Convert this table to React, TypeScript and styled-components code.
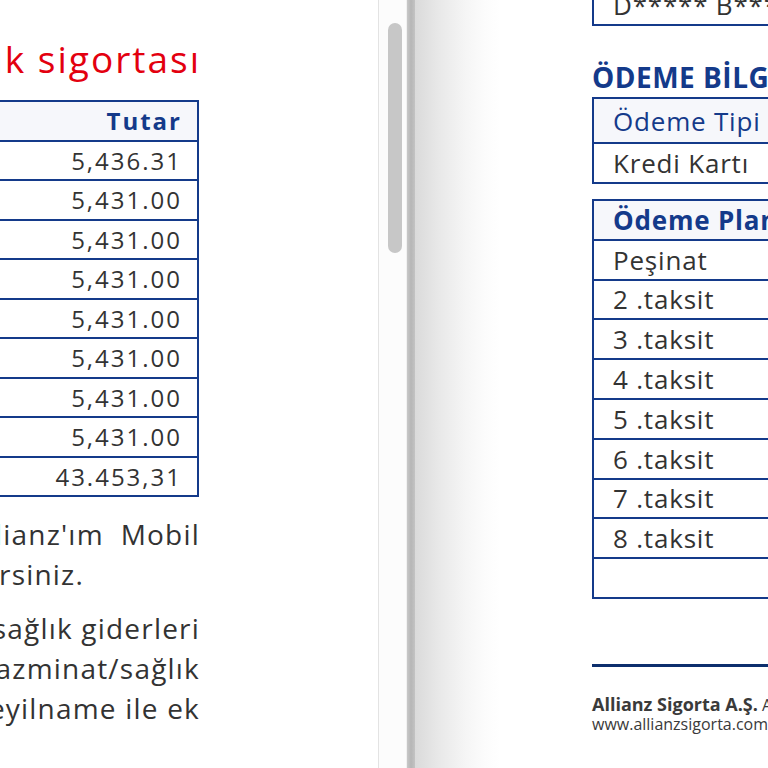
import React from "react";
import styled, { createGlobalStyle } from "styled-components";

const GlobalStyle = createGlobalStyle`
  html, body { margin: 0; padding: 0; background: #fff; }
  body { font-family: "Open Sans", "Liberation Sans", sans-serif; }
`;

const BLUE = "#143a8a";
const TEXT = "#333333";

const Viewer = styled.div`
  display: flex;
  width: 768px;
  height: 768px;
  overflow: hidden;
  background: #fff;
`;

const LeftPane = styled.div`
  width: 378px;
  flex-shrink: 0;
  overflow: hidden;
  display: flex;
  justify-content: flex-end;
  border-right: 1px solid #e3e3e3;
  background: #fff;
`;

const LeftColumn = styled.div`
  flex-shrink: 0;
  width: 1000px;
  margin-right: 179px;
  padding-top: 41px;
`;

const Title = styled.div`
  color: #e3000f;
  font-size: 37px;
  line-height: 36px;
  letter-spacing: 2px;
  margin-right: -2px;
  text-align: right;
  white-space: nowrap;
`;

const Table = styled.div<{ $mt: number }>`
  margin-top: ${(p) => p.$mt}px;
  border: 2px solid ${BLUE};
  display: flex;
  flex-direction: column;
`;

const Row = styled.div<{ $h: number; $head?: boolean }>`
  height: ${(p) => p.$h}px;
  display: flex;
  align-items: center;
  background: ${(p) => (p.$head ? "#f6f7fb" : "#fff")};
  color: ${TEXT};
  white-space: nowrap;
  & + & {
    border-top: 2px solid ${BLUE};
  }
`;

const AmountRow = styled(Row)`
  justify-content: flex-end;
  padding-right: 15px;
  font-size: 24px;
  letter-spacing: 2px;
`;

const LabelRow = styled(Row)`
  justify-content: flex-start;
  padding-left: 19px;
  font-size: 26px;
  letter-spacing: 0.8px;
`;

const HeadText = styled.span<{ $bold?: boolean }>`
  color: ${BLUE};
  font-weight: ${(p) => (p.$bold ? 700 : 400)};
`;

const Para = styled.div<{ $mt: number }>`
  margin-top: ${(p) => p.$mt}px;
  font-size: 28px;
  line-height: 40px;
  letter-spacing: 1.2px;
  color: ${TEXT};
`;

const Line = styled.div<{ $end?: number }>`
  text-align: right;
  white-space: nowrap;
  margin-right: ${(p) => (p.$end ?? 0) - 1}px;
`;

const ScrollTrack = styled.div`
  width: 28px;
  flex-shrink: 0;
  padding: 23px 0 0 9px;
  box-sizing: border-box;
  background: #fcfcfc;
  border-right: 1px solid #f1f1f1;
`;

const Thumb = styled.div`
  width: 14px;
  height: 230px;
  border-radius: 7px;
  background: #c7c7c7;
`;

const Divider = styled.div`
  width: 8px;
  flex-shrink: 0;
  background: linear-gradient(to right, #c8c8c8, #b6b6b6 50%, #c3c3c3);
`;

const RightPage = styled.div`
  flex: 1;
  overflow: hidden;
  padding-left: 177px;
  background: linear-gradient(
    to right,
    #dadada 0px,
    #e9e9e9 25px,
    #f5f5f5 50px,
    #fcfcfc 70px,
    #ffffff 85px
  );
`;

const RightColumn = styled.div`
  width: 620px;
`;

const TopBox = styled.div`
  margin-top: -16px;
  height: 38px;
  border: 2px solid ${BLUE};
  display: flex;
  align-items: center;
  padding-left: 19px;
  font-size: 26px;
  letter-spacing: 0.8px;
  color: ${TEXT};
  background: #fff;
  white-space: nowrap;
`;

const SectionHeading = styled.div`
  margin-top: 36px;
  font-size: 28px;
  line-height: 30px;
  font-weight: 700;
  letter-spacing: 0.5px;
  color: ${BLUE};
  white-space: nowrap;
`;

const FooterRule = styled.div`
  margin-top: 65px;
  height: 3px;
  background: #0d2f6d;
`;

const FooterText = styled.div`
  margin-top: 28px;
  font-size: 16px;
  line-height: 19px;
  color: #3a3a3a;
  white-space: nowrap;
`;

const Strong = styled.span`
  font-weight: 700;
  font-size: 18px;
`;

const amounts = [
  "5,436.31",
  "5,431.00",
  "5,431.00",
  "5,431.00",
  "5,431.00",
  "5,431.00",
  "5,431.00",
  "5,431.00",
  "43.453,31",
];

const planRows = [
  "Peşinat",
  "2 .taksit",
  "3 .taksit",
  "4 .taksit",
  "5 .taksit",
  "6 .taksit",
  "7 .taksit",
  "8 .taksit",
  "",
];

export default function App() {
  return (
    <>
      <GlobalStyle />
      <Viewer>
        <LeftPane>
          <LeftColumn>
            <Title>Ödeme planı - Sağlık sigortası</Title>
            <Table $mt={23}>
              <AmountRow $h={37.5} $head>
                <HeadText $bold>Tutar</HeadText>
              </AmountRow>
              {amounts.map((a, i) => (
                <AmountRow key={i} $h={37.5}>
                  {a}
                </AmountRow>
              ))}
            </Table>
            <Para $mt={16.5}>
              <Line>Poliçe bilgilerinize Allianz'ım&nbsp; Mobil</Line>
              <Line $end={116}>uygulaması üzerinden ulaşabilirsiniz.</Line>
            </Para>
            <Para $mt={14.5}>
              <Line>Poliçe kapsamında ödenecek sağlık giderleri</Line>
              <Line>için belirlenen tazminat/sağlık</Line>
              <Line>teminatları zeyilname ile ek</Line>
            </Para>
          </LeftColumn>
        </LeftPane>
        <ScrollTrack>
          <Thumb />
        </ScrollTrack>
        <Divider />
        <RightPage>
          <RightColumn>
            <TopBox>D***** B*****</TopBox>
            <SectionHeading>ÖDEME BİLGİLERİ</SectionHeading>
            <Table $mt={5}>
              <LabelRow $h={43} $head>
                <HeadText>Ödeme Tipi</HeadText>
              </LabelRow>
              <LabelRow $h={38}>Kredi Kartı</LabelRow>
            </Table>
            <Table $mt={15}>
              <LabelRow $h={37.8} $head>
                <HeadText $bold>Ödeme Planı</HeadText>
              </LabelRow>
              {planRows.map((r, i) => (
                <LabelRow key={i} $h={37.8}>
                  {r}
                </LabelRow>
              ))}
            </Table>
            <FooterRule />
            <FooterText>
              <Strong>Allianz Sigorta A.Ş.</Strong> Allianz Tower Küçükbakkalköy Mah.
              <br />
              www.allianzsigorta.com.tr
            </FooterText>
          </RightColumn>
        </RightPage>
      </Viewer>
    </>
  );
}
